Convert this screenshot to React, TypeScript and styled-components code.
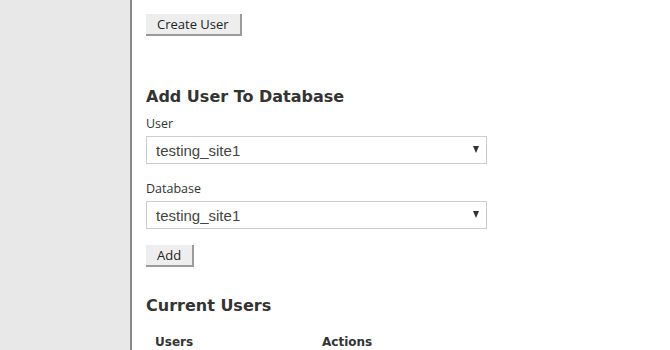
import styled, { createGlobalStyle } from 'styled-components';

const GlobalStyle = createGlobalStyle`
    html, body {
        margin: 0;
        padding: 0;
        background: #ffffff;
    }

    body {
        font-family: "Open Sans", "Liberation Sans", sans-serif;
        color: #333333;
    }
`;

const Layout = styled.div`
    display: flex;
    min-height: 350px;
`;

const Sidebar = styled.aside`
    width: 130px;
    flex-shrink: 0;
    background: #e8e8e8;
    border-right: 2px solid #8a8a8a;
`;

const Main = styled.main`
    flex: 1;
    padding: 14px 0 0 14px;
`;

const Button = styled.button<{ spaced?: boolean }>`
    display: block;
    height: 22px;
    margin-top: ${({ spaced }) => (spaced ? '16px' : '0')};
    padding: 0 11px 1px;
    font-family: "Open Sans", "Liberation Sans", sans-serif;
    font-size: 13px;
    color: #222222;
    background: #eeeeee;
    border: none;
    border-right: 2px solid #9a9a9a;
    border-bottom: 2px solid #9a9a9a;
    border-radius: 0;
    cursor: pointer;
`;

const Heading = styled.h2<{ first?: boolean }>`
    margin: ${({ first }) => (first ? '49px' : '27px')} 0 0;
    font-family: "DejaVu Sans", Verdana, sans-serif;
    font-size: 16px;
    font-weight: bold;
    line-height: 24px;
    color: #333333;
`;

const Field = styled.div`
    display: flex;
    flex-direction: column;
    margin-top: 5px;
    margin-bottom: 15px;
`;

const Label = styled.label`
    font-size: 12.5px;
    line-height: 20px;
    color: #333333;
    margin-bottom: 2px;
`;

const SelectBox = styled.div`
    position: relative;
    width: 341px;
    height: 28px;
    box-sizing: border-box;
    border: 1px solid #cccccc;
    background: #ffffff;
`;

const Select = styled.select`
    appearance: none;
    width: 100%;
    height: 100%;
    border: none;
    background: transparent;
    padding: 0 24px 0 9px;
    font-family: "Liberation Sans", Arial, sans-serif;
    font-size: 15px;
    color: #444444;
    outline: none;
`;

const Arrow = styled.span`
    position: absolute;
    right: 7px;
    top: 9px;
    width: 0;
    height: 0;
    border-left: 3.5px solid transparent;
    border-right: 3.5px solid transparent;
    border-top: 7px solid #333333;
    pointer-events: none;
`;

const Table = styled.table`
    margin-top: 15px;
    border-collapse: collapse;
`;

const HeaderCell = styled.th`
    width: 158px;
    padding: 0 0 0 9px;
    text-align: left;
    font-family: "DejaVu Sans", Verdana, sans-serif;
    font-size: 12px;
    font-weight: bold;
    line-height: 18px;
    color: #333333;
`;

function Dropdown({ label, value }: { label: string; value: string }) {
    return (
        <Field>
            <Label>{label}</Label>
            <SelectBox>
                <Select defaultValue={value}>
                    <option value={value}>{value}</option>
                </Select>
                <Arrow />
            </SelectBox>
        </Field>
    );
}

export default function App() {
    return (
        <>
            <GlobalStyle />
            <Layout>
                <Sidebar />
                <Main>
                    <Button>Create User</Button>

                    <Heading first>Add User To Database</Heading>
                    <Dropdown label="User" value="testing_site1" />
                    <Dropdown label="Database" value="testing_site1" />
                    <Button spaced>Add</Button>

                    <Heading>Current Users</Heading>
                    <Table>
                        <thead>
                            <tr>
                                <HeaderCell>Users</HeaderCell>
                                <HeaderCell>Actions</HeaderCell>
                            </tr>
                        </thead>
                    </Table>
                </Main>
            </Layout>
        </>
    );
}
